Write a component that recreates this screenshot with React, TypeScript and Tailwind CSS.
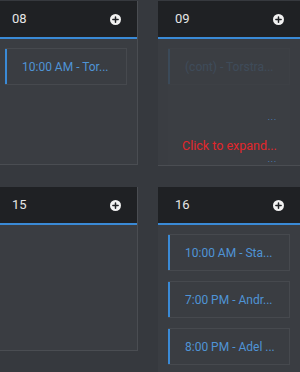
import { Plus } from "lucide-react";

type Event = { id: string; label: string };

type Day = {
  day: string;
  events: Event[];
  overflow?: boolean;
};

const rows: Day[][] = [
  [
    { day: "08", events: [{ id: "a", label: "10:00 AM - Tor..." }] },
    {
      day: "09",
      events: [{ id: "b", label: "(cont) - Torstra..." }],
      overflow: true,
    },
  ],
  [
    { day: "15", events: [] },
    {
      day: "16",
      events: [
        { id: "c", label: "10:00 AM - Sta..." },
        { id: "d", label: "7:00 PM - Andr..." },
        { id: "e", label: "8:00 PM - Adel ..." },
      ],
    },
  ],
];

function AddButton() {
  return (
    <span className="flex size-[11px] items-center justify-center rounded-full bg-[#f2f2f2]">
      <Plus className="size-[9px] text-[#1f2124]" strokeWidth={4} />
    </span>
  );
}

function EventItem({ label }: { label: string }) {
  return (
    <div className="flex h-[37px] shrink-0 items-center border border-l-0 border-[#46494e] bg-[#3a3d42]">
      <div className="h-full w-[2px] bg-[#3a8ad6]" />
      <span className="pl-[15px] text-[12px] leading-none text-[#4f94d6]">
        {label}
      </span>
    </div>
  );
}

function DayCell({ day }: { day: Day }) {
  return (
    <div className="flex min-h-[164px] w-[143px] shrink-0 flex-col border-r border-b border-[#4a4d52] bg-[#3a3d42]">
      <div className="flex h-[36px] shrink-0 items-center justify-between bg-[#1f2124] pr-[16px] pl-[17px]">
        <span className="text-[13px] text-[#e6e6e6]">{day.day}</span>
        <AddButton />
      </div>
      <div className="h-[2px] shrink-0 bg-[#3a8ad6]" />
      <div
        className={
          day.overflow
            ? "relative flex h-[126px] flex-col overflow-hidden px-[10px] pt-[9px]"
            : "flex flex-1 flex-col gap-[10px] px-[10px] pt-[9px] pb-[10px]"
        }
      >
        {day.events.map((event) => (
          <div key={event.id} className={day.overflow ? "opacity-25" : ""}>
            <EventItem label={event.label} />
          </div>
        ))}
        {day.overflow && (
          <div className="absolute inset-x-[10px] top-[9px] bottom-0 bg-[#3e4146]/40">
            <span className="absolute top-[66px] right-[13px] text-[8px] leading-none tracking-[1px] text-[#4f94d6]">
              ...
            </span>
            <span className="absolute top-[92px] left-[14px] text-[12.5px] leading-none text-[#e3262b]">
              Click to expand...
            </span>
            <span className="absolute right-[13px] bottom-[1px] text-[8px] leading-none tracking-[1px] text-[#4f94d6]">
              ...
            </span>
          </div>
        )}
      </div>
    </div>
  );
}

export default function App() {
  return (
    <div
      className="h-[372px] w-[300px] overflow-hidden bg-[#36393e] pt-px"
      style={{ fontFamily: "Roboto, 'Liberation Sans', sans-serif" }}
    >
      <div className="ml-[-5px] flex flex-col gap-[21px]">
        {rows.map((row, i) => (
          <div key={i} className="flex items-start gap-[20px]">
            {row.map((day) => (
              <DayCell key={day.day} day={day} />
            ))}
          </div>
        ))}
      </div>
    </div>
  );
}
